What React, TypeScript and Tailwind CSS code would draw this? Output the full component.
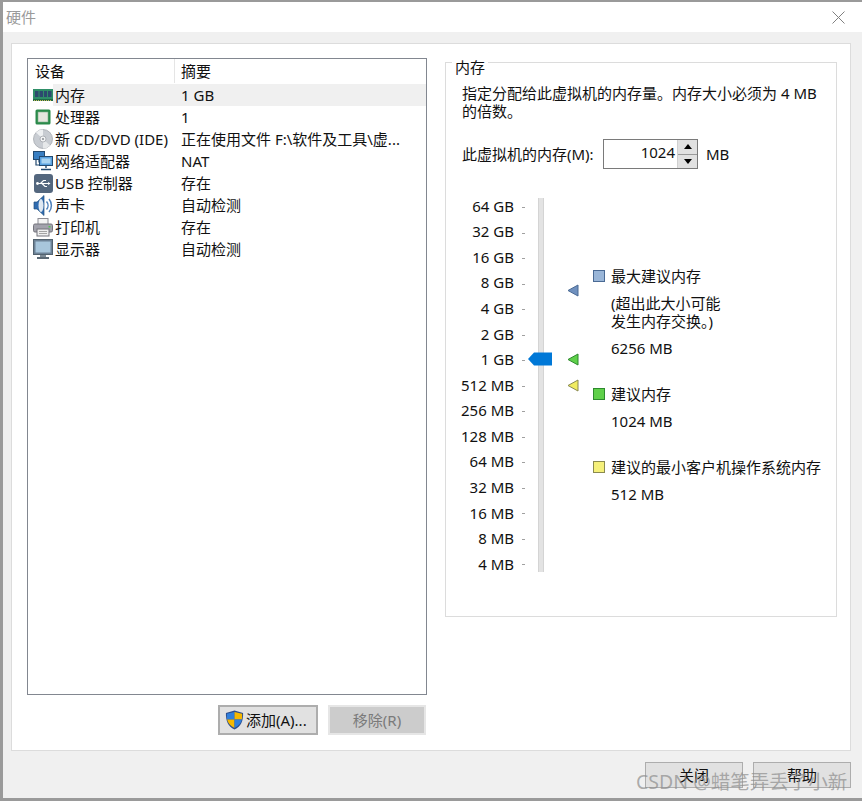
import React from 'react'

const font = { fontFamily: '"Noto Sans", "Noto Sans CJK SC", sans-serif' }

const MemIcon = () => (
  <svg width="20" height="14" viewBox="0 0 20 14">
    <rect x="0" y="1" width="20" height="11" fill="#2f8f68" />
    <rect x="0" y="11" width="20" height="2" fill="#1d6b46" />
    <rect x="2" y="3" width="3.5" height="6" fill="#2c4a6e" />
    <rect x="6.5" y="3" width="3.5" height="6" fill="#2c4a6e" />
    <rect x="11" y="3" width="3" height="6" fill="#2c4a6e" />
    <rect x="15" y="3" width="3.5" height="6" fill="#2c4a6e" />
    <path d="M1 12.500h18" stroke="#c9b45a" strokeWidth="1" strokeDasharray="1 1" />
  </svg>
)

const CpuIcon = () => (
  <svg width="16" height="16" viewBox="0 0 16 16">
    <rect x="0.5" y="0.5" width="15" height="15" rx="1.5" fill="#2a8a4a" />
    <rect x="3" y="3" width="10" height="10" fill="#e6e6de" stroke="#7fb08a" strokeWidth="0.6" />
  </svg>
)

const DiscIcon = () => (
  <svg width="20" height="20" viewBox="0 0 20 20">
    <circle cx="10" cy="10" r="9.500" fill="#c8ccd2" stroke="#a4a8ae" strokeWidth="0.8" />
    <path d="M10 10L3 3.500A9.500 9.500 0 0 1 10 .5Z" fill="#eef0f2" />
    <path d="M10 10L17 16.500A9.500 9.500 0 0 1 10 19.500Z" fill="#e6e8ea" />
    <circle cx="10" cy="10" r="3" fill="#f2f3f4" stroke="#9a9ea4" strokeWidth="0.7" />
    <circle cx="10" cy="10" r="1" fill="#8a8e94" />
  </svg>
)

const NetIcon = () => (
  <svg width="20" height="20" viewBox="0 0 20 20">
    <rect x="0.5" y="0.5" width="11" height="8" fill="#3a7fc2" stroke="#234a70" />
    <path d="M3 9v5h3M6 9v2h2" stroke="#234a70" fill="none" strokeWidth="1.2" />
    <rect x="6.5" y="5.5" width="13" height="9" fill="#5aa2e0" stroke="#234a70" />
    <rect x="8.5" y="7.5" width="9" height="5" fill="#a9d4f2" />
    <path d="M13 15v2M8 18.500h10" stroke="#234a70" strokeWidth="1.4" />
  </svg>
)

const UsbIcon = () => (
  <svg width="19" height="19" viewBox="0 0 19 19">
    <rect x="0" y="0" width="19" height="19" rx="3" fill="#54677e" />
    <path d="M3 9.500h13M6.500 9.500l3-3h2.500M8 9.500l3 3h2" stroke="#fff" strokeWidth="1.2" fill="none" />
    <path d="M16.500 9.500l-2.500-1.600v3.200Z" fill="#fff" />
    <circle cx="3.500" cy="9.500" r="1.400" fill="#fff" />
  </svg>
)

const SoundIcon = () => (
  <svg width="20" height="21" viewBox="0 0 20 21">
    <path d="M1 7h3l7-6.500v20L4 14H1Z" fill="#2f6bb0" stroke="#24507f" strokeWidth="0.7" />
    <ellipse cx="8" cy="10.500" rx="2.500" ry="6.500" fill="#dfe8f2" />
    <path d="M13.500 6.500a6 6 0 0 1 0 8M16 4a10 10 0 0 1 0 13" stroke="#4f82bc" strokeWidth="1.5" fill="none" />
  </svg>
)

const PrinterIcon = () => (
  <svg width="20" height="19" viewBox="0 0 20 19">
    <rect x="5" y="0.5" width="10" height="6" fill="#f4f4f4" stroke="#8c8c94" />
    <rect x="0.5" y="6" width="19" height="8" rx="1.500" fill="#a2a2ac" stroke="#74747c" />
    <rect x="15.500" y="8" width="2" height="1.500" fill="#55c455" />
    <rect x="4" y="11" width="12" height="7" fill="#efefef" stroke="#74747c" />
    <path d="M6 13.500h8M6 15.500h8" stroke="#a4a4a4" />
  </svg>
)

const MonitorIcon = () => (
  <svg width="20" height="20" viewBox="0 0 20 20">
    <rect x="0.5" y="0.5" width="19" height="15" fill="#6d8296" stroke="#52626f" />
    <rect x="2.500" y="2.500" width="15" height="11" fill="#a8c6dc" />
    <rect x="7" y="16" width="6" height="2" fill="#7c8a96" />
    <rect x="4" y="18" width="12" height="2" fill="#5a6874" />
  </svg>
)

const ShieldIcon = () => (
  <svg width="19" height="20" viewBox="0 0 20 21">
    <path d="M10 .5L19 3c.3 8-2 14-9 17.500C3 17 .7 11 1 3Z" fill="#2b4c8c" />
    <path d="M10 2L10 10H2.200C2 7.500 2 6 2 4Z" fill="#2f7fdc" />
    <path d="M10 2l8 2c0 2 0 3.500-.2 6H10Z" fill="#f5b800" />
    <path d="M2.200 10H10v9C5.500 16.500 3 14 2.200 10Z" fill="#f5b800" />
    <path d="M10 10h7.800c-.8 4-3.300 6.500-7.800 9Z" fill="#2f7fdc" />
  </svg>
)

const devices = [
  { icon: MemIcon, name: '内存', summary: '1 GB', active: true },
  { icon: CpuIcon, name: '处理器', summary: '1' },
  { icon: DiscIcon, name: '新 CD/DVD (IDE)', summary: '正在使用文件 F:\\软件及工具\\虚...' },
  { icon: NetIcon, name: '网络适配器', summary: 'NAT' },
  { icon: UsbIcon, name: 'USB 控制器', summary: '存在' },
  { icon: SoundIcon, name: '声卡', summary: '自动检测' },
  { icon: PrinterIcon, name: '打印机', summary: '存在' },
  { icon: MonitorIcon, name: '显示器', summary: '自动检测' },
]

const sizes = ['64 GB', '32 GB', '16 GB', '8 GB', '4 GB', '2 GB', '1 GB', '512 MB', '256 MB', '128 MB', '64 MB', '32 MB', '16 MB', '8 MB', '4 MB']

const Marker = ({ fill, stroke, className }: { fill: string; stroke: string; className: string }) => (
  <svg width="12" height="13" viewBox="0 0 12 13" className={className}>
    <path d="M11 1v11L1 6.500Z" fill={fill} stroke={stroke} />
  </svg>
)

const Swatch = ({ className }: { className: string }) => (
  <div className={'w-3 h-3 border shrink-0 ' + className}></div>
)

const DeviceList = () => (
  <div className="w-[400px] h-[637px] border border-[#828790] bg-white flex flex-col">
    <div className="h-[25px] flex items-center shrink-0 pb-px">
      <div className="w-[147px] h-full pl-[7px] border-r border-[#e5e5e5] flex items-center">设备</div>
      <div className="pl-[6px]">摘要</div>
    </div>
    {devices.map(({ icon: Icon, name, summary, active }) => (
      <div key={name} className="h-[22px] flex items-center shrink-0">
        <div className="w-[25px] h-full flex items-center justify-center pl-[5px] shrink-0">
          <Icon />
        </div>
        <div className={'flex-1 h-full flex items-center ' + (active ? 'bg-[#f0f0f0]' : '')}>
          <div className="w-[128px] pl-[2px] whitespace-nowrap">{name}</div>
          <div className="whitespace-nowrap">{summary}</div>
        </div>
      </div>
    ))}
  </div>
)

const MemoryGroup = () => (
  <div className="relative w-[392px] h-[555px] mt-1 border border-[#dcdcdc] pl-4 pt-[21px]">
    <div className="absolute left-[6px] top-[-6px] bg-white px-[3px] leading-[20px]">内存</div>
    <p className="leading-[18px] w-[360px]">指定分配给此虚拟机的内存量。内存大小必须为 4 MB 的倍数。</p>
    <div className="flex items-center mt-[19px]">
      <span className="w-[141px] whitespace-nowrap">此虚拟机的内存(M):</span>
      <div className="flex w-[95px] h-[30px] border border-[#7a7a7a]">
        <div className="w-[73px] text-right pr-[2px] leading-[24px]">1024</div>
        <div className="flex-1 flex flex-col border-l border-[#d0d0d0] bg-[#e1e1e1]">
          <div className="flex-1 flex items-center justify-center border-b border-[#9a9a9a]">
            <div className="w-0 h-0 border-x-4 border-x-transparent border-b-[5px] border-b-black"></div>
          </div>
          <div className="flex-1 flex items-center justify-center">
            <div className="w-0 h-0 border-x-4 border-x-transparent border-t-[5px] border-t-black"></div>
          </div>
        </div>
      </div>
      <span className="ml-2">MB</span>
    </div>

    <div className="flex mt-[29px]">
      <div className="relative w-[131px] h-[374px]">
        <div className="absolute left-[76px] top-0 w-[6px] h-full bg-[#e3e3e3] border-x border-[#d4d4d4]"></div>
        <div className="flex flex-col justify-between h-[358px] mt-[8px] w-[52px] text-right">
          {sizes.map((s) => (
            <div key={s} className="h-0 flex items-center justify-end whitespace-nowrap">{s}</div>
          ))}
        </div>
        <div className="absolute left-[60px] top-[9px] h-[358px] flex flex-col justify-between">
          {sizes.map((s) => (
            <div key={s} className="w-[3px] h-px bg-[#a0a0a0]"></div>
          ))}
        </div>
        <svg width="24" height="14" viewBox="0 0 24 14" className="absolute left-[66px] top-[154px]">
          <path d="M0 7L6 .5h18v13H6Z" fill="#0078d7" />
        </svg>
        <Marker fill="#6f90be" stroke="#4a6a94" className="absolute left-[105px] top-[86px]" />
        <Marker fill="#5fd04a" stroke="#2d8a2d" className="absolute left-[105px] top-[155px]" />
        <Marker fill="#f0ec60" stroke="#8a8a50" className="absolute left-[105px] top-[181px]" />
      </div>

      <div className="flex flex-col leading-[18px] whitespace-nowrap">
        <div className="flex items-center gap-[6px] mt-[69px]">
          <Swatch className="bg-[#9ab6d8] border-[#4a6a94]" />
          <span>最大建议内存</span>
        </div>
        <div className="pl-[18px] mt-[9px]">(超出此大小可能</div>
        <div className="pl-[18px]">发生内存交换。)</div>
        <div className="pl-[18px] mt-[9px]">6256 MB</div>
        <div className="flex items-center gap-[6px] mt-[28px]">
          <Swatch className="bg-[#5fd04a] border-[#2d8a2d]" />
          <span>建议内存</span>
        </div>
        <div className="pl-[18px] mt-[9px]">1024 MB</div>
        <div className="flex items-center gap-[6px] mt-[28px]">
          <Swatch className="bg-[#f5f07a] border-[#8a8a50]" />
          <span>建议的最小客户机操作系统内存</span>
        </div>
        <div className="pl-[18px] mt-[9px]">512 MB</div>
      </div>
    </div>
  </div>
)

export default function App() {
  return (
    <div className="relative w-[862px] h-[801px] overflow-hidden bg-[#9a9a9a] pl-[3px] pt-[2px] pb-[3px] text-[15px] text-[#111]" style={font}>
      <div className="w-full h-full flex flex-col bg-[#f0f0f0]">
        <div className="h-[30px] shrink-0 bg-white flex items-center justify-between pl-[3px] pr-[17px] text-[#9a9a9a]">
          <span>硬件</span>
          <svg width="13" height="13" viewBox="0 0 13 13">
            <path d="M.5.5l12 12M12.500.5l-12 12" stroke="#808080" strokeWidth="1" />
          </svg>
        </div>

        <div className="ml-[8px] mr-[11px] mt-[11px] h-[708px] shrink-0 border border-[#dcdcdc] bg-white pl-[15px] pt-[14px] flex gap-[18px]">
          <div className="flex flex-col">
            <DeviceList />
            <div className="flex justify-end gap-[10px] mt-[10px] pr-px">
              <button className="w-[100px] h-[30px] flex items-center pl-[5px] gap-[2px] bg-[#e1e1e1] border-2 border-[#adadad]">
                <ShieldIcon />
                <span>添加(A)...</span>
              </button>
              <button className="w-[98px] h-[30px] bg-[#cccccc] border-2 border-[#e6e6e6] text-[#7a7a7a]">移除(R)</button>
            </div>
          </div>
          <MemoryGroup />
        </div>

        <div className="flex justify-end gap-[10px] pr-[11px] mt-[11px]">
          <button className="w-[98px] h-[26px] bg-[#e1e1e1] border border-[#adadad]">关闭</button>
          <button className="w-[98px] h-[26px] bg-[#e1e1e1] border border-[#adadad]">帮助</button>
        </div>
      </div>
      <div className="absolute left-[636px] top-[769px] text-[19.5px] leading-[26px] text-[#8c8c8c]/70 whitespace-nowrap">CSDN @蜡笔弄丢了小新</div>
    </div>
  )
}
